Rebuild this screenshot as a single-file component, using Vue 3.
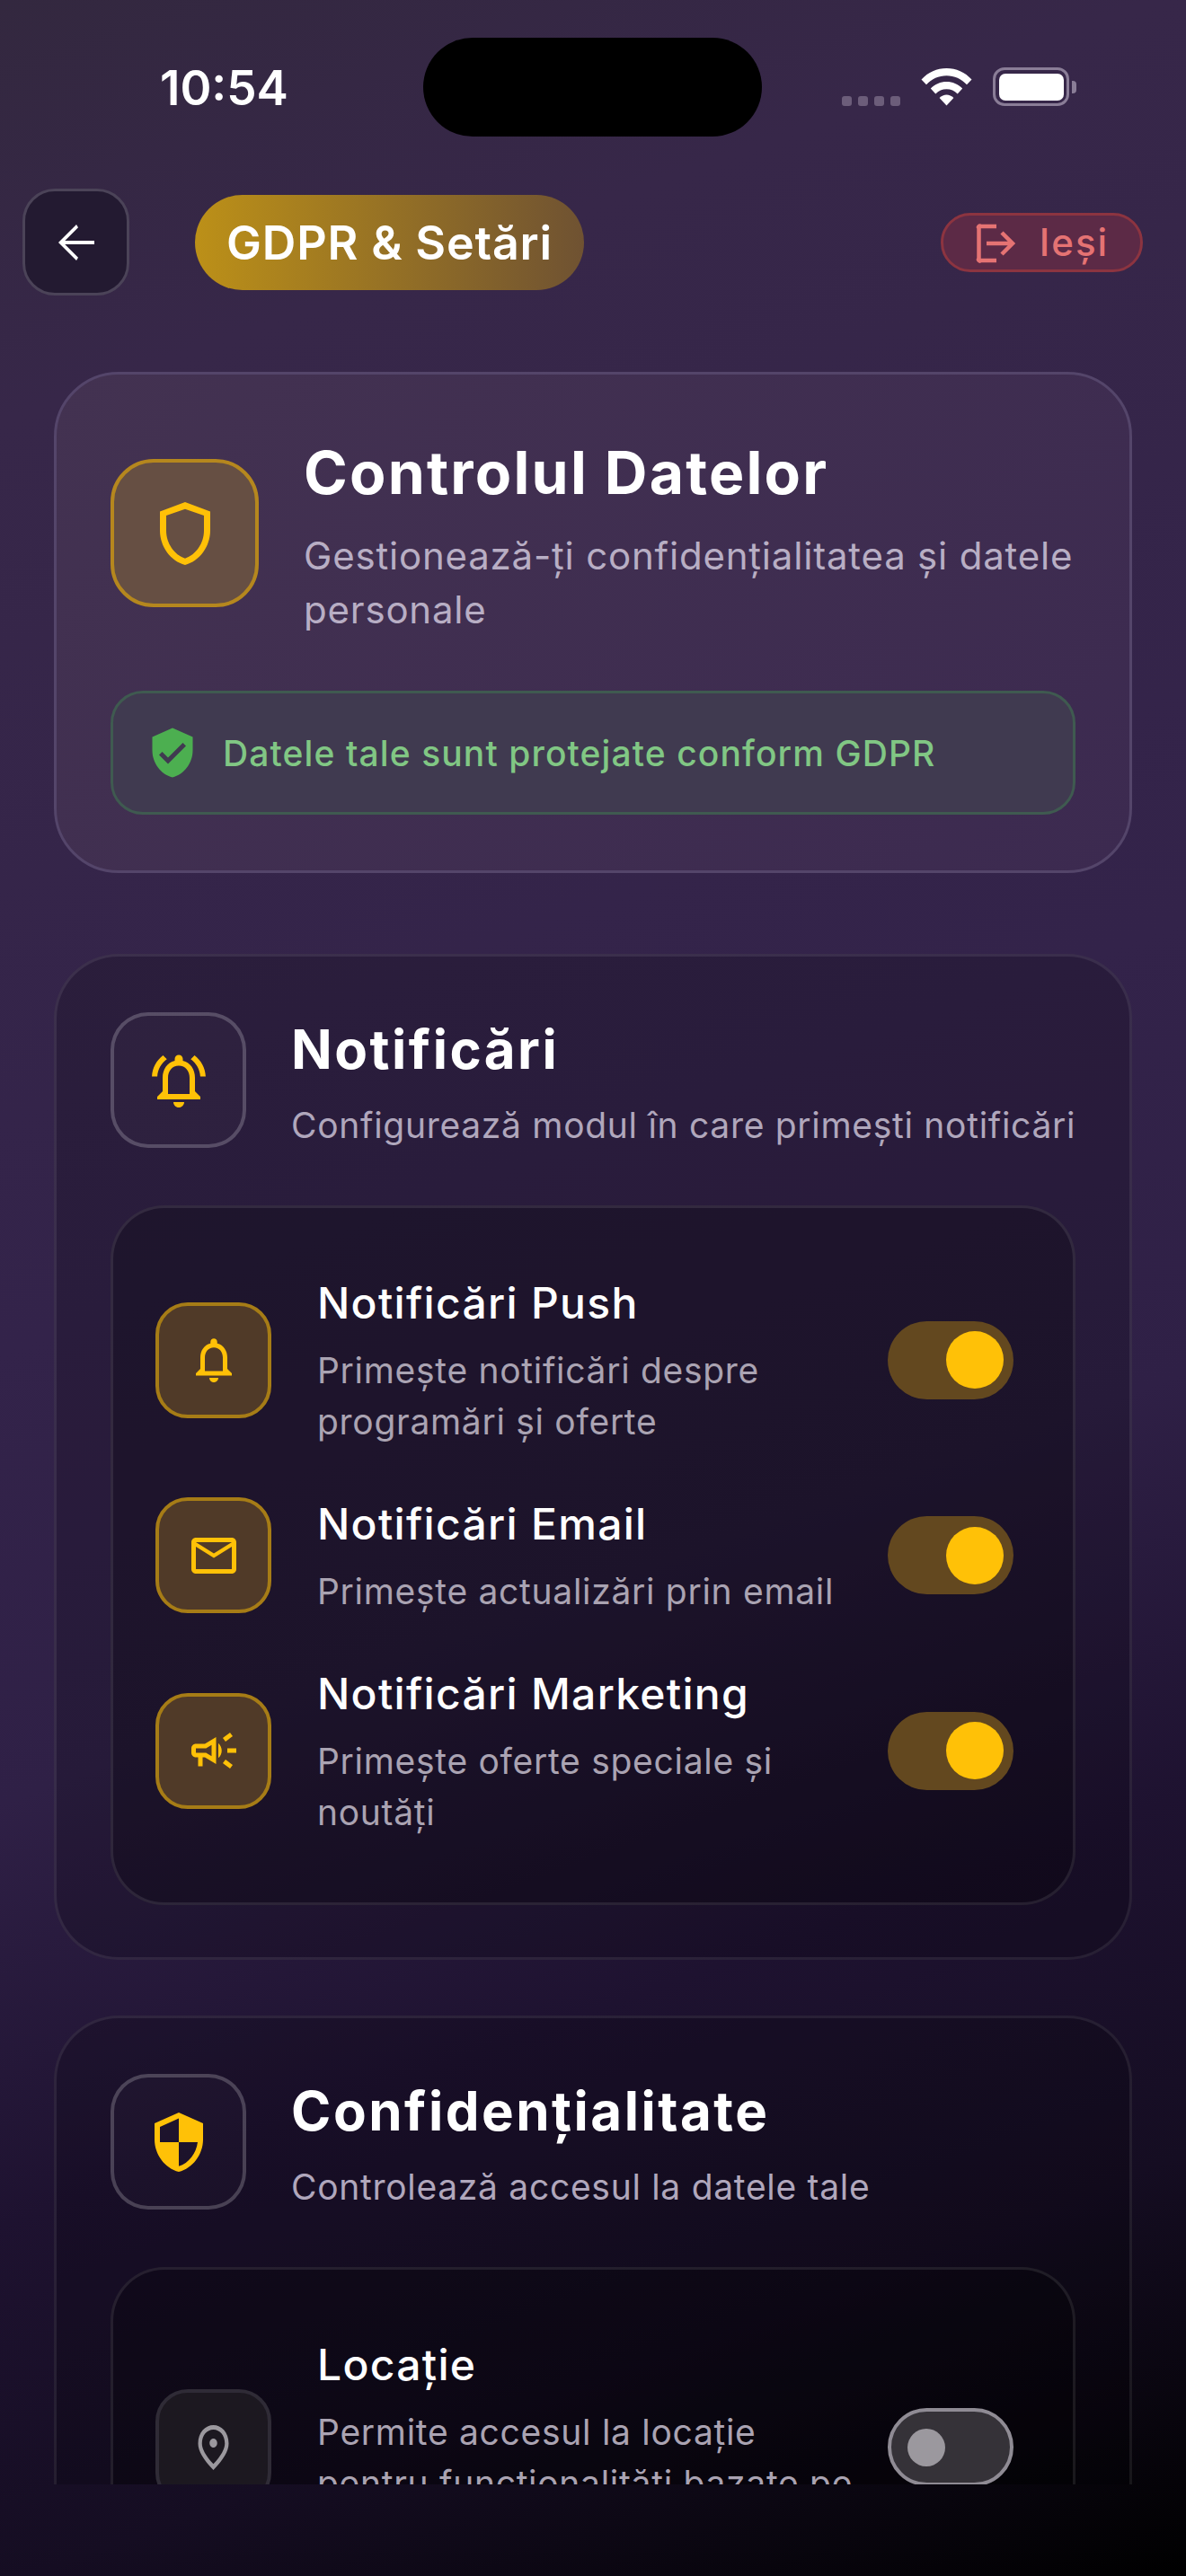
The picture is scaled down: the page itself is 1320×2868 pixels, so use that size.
<script setup>
const notificari = [
  { id: 'push', titlu: 'Notificări Push', text: 'Primește notificări despre programări și oferte', on: true },
  { id: 'email', titlu: 'Notificări Email', text: 'Primește actualizări prin email', on: true },
  { id: 'marketing', titlu: 'Notificări Marketing', text: 'Primește oferte speciale și noutăți', on: true }
]
const confidentialitate = [
  { id: 'locatie', titlu: 'Locație', text: 'Permite accesul la locație pentru funcționalități bazate pe locație', on: false }
]
</script>

<template>
  <div class="ecran">
    <div class="continut">
      <div class="status-bar">
        <span class="ora">10:54</span>
        <div class="insula"></div>
        <div class="status-dreapta">
          <div class="semnal"><i></i><i></i><i></i><i></i></div>
          <svg class="wifi" viewBox="0 0 57 42">
            <path fill="#fff" d="M28.5 0C17.8 0 8 4.2 0.5 12.6L6 18.3C12 11.7 19.8 8.2 28.5 8.2S45 11.7 51 18.3L56.5 12.6C49 4.2 39.2 0 28.5 0Z" />
            <path fill="#fff" d="M28.5 15C21.8 15 15.8 17.6 10.8 22.6L16.3 28.4C19.6 25 23.8 23.2 28.5 23.2S37.4 25 40.7 28.4L46.2 22.6C41.2 17.6 35.2 15 28.5 15Z" />
            <path fill="#fff" d="M28.5 29.6C25.6 29.6 22.8 30.8 20.6 33L28.5 41.6L36.4 33C34.2 30.8 31.4 29.6 28.5 29.6Z" />
          </svg>
          <div class="baterie"><div class="baterie-nivel"></div></div>
          <div class="baterie-cap"></div>
        </div>
      </div>

      <header class="antet">
        <button class="btn-inapoi">
          <svg viewBox="0 0 24 24" width="60" height="60" fill="#fff">
            <path d="M20 11.2H6.9l5.9-5.9L12 4l-8 8 8 8 .8-1.3-5.9-5.9H20v-1.6z" />
          </svg>
        </button>
        <div class="pastila-titlu">GDPR &amp; Setări</div>
        <button class="btn-iesi">
          <svg viewBox="0 0 48 48" width="48" height="48" fill="none" stroke="#e57373" stroke-width="4.5">
            <path d="M24 6H6.5A1 1 0 0 0 4.5 8V42A1 1 0 0 0 6.5 44H24" />
            <path d="M13 25H41M30 13L42 25L30 37" />
          </svg>
          <span>Ieși</span>
        </button>
      </header>

      <section class="card-control">
        <div class="control-sus">
          <div class="icon-control">
            <svg viewBox="0 0 24 24" width="84" height="84" fill="#ffc107">
              <path d="M12 2 4 5v6.09c0 5.05 3.41 9.76 8 10.91 4.59-1.15 8-5.86 8-10.91V5l-8-3zm6 9.09c0 4-2.55 7.7-6 8.83-3.45-1.13-6-4.82-6-8.83V6.31l6-2.12 6 2.12v4.78z" />
            </svg>
          </div>
          <div>
            <h1 class="control-titlu">Controlul Datelor</h1>
            <p class="control-text">Gestionează-ți confidențialitatea și datele personale</p>
          </div>
        </div>
        <div class="gdpr-ok">
          <svg viewBox="0 0 24 24" width="60" height="60" fill="#4caf50">
            <path d="M12 1 3 5v6c0 5.55 3.84 10.74 9 12 5.16-1.26 9-6.45 9-12V5l-9-4zm-2 16-4-4 1.41-1.41L10 14.17l6.59-6.59L18 9l-8 8z" />
          </svg>
          <span>Datele tale sunt protejate conform GDPR</span>
        </div>
      </section>

      <section class="sectiune prima">
        <div class="sectiune-cap">
          <div class="icon-sectiune">
            <svg viewBox="0 0 24 24" width="72" height="72" fill="#ffc107">
              <path d="M12 22c1.1 0 2-.9 2-2h-4c0 1.1.9 2 2 2zm6-6v-5c0-3.07-1.63-5.64-4.5-6.32V4c0-.83-.67-1.5-1.5-1.5s-1.5.67-1.5 1.5v.68C7.64 5.36 6 7.92 6 11v5l-2 2v1h16v-1l-2-2zm-2 1H8v-6c0-2.48 1.51-4.5 4-4.5s4 2.02 4 4.5v6z" />
              <path d="M7.58 4.08 6.15 2.65C3.75 4.48 2.17 7.3 2.03 10.5h2c.15-2.65 1.51-4.97 3.55-6.42zM19.97 10.5h2c-.15-3.2-1.73-6.02-4.12-7.85l-1.42 1.43c2.02 1.45 3.39 3.77 3.54 6.42z" />
            </svg>
          </div>
          <div>
            <h2 class="sectiune-titlu">Notificări</h2>
            <p class="sectiune-text">Configurează modul în care primești notificări</p>
          </div>
        </div>
        <div class="lista">
          <div v-for="n in notificari" :key="n.id" class="rand">
            <div class="icon-rand activ">
              <svg v-if="n.id === 'push'" viewBox="0 0 24 24" width="60" height="60" fill="#ffc107">
                <path d="M12 22c1.1 0 2-.9 2-2h-4c0 1.1.89 2 2 2zm6-6v-5c0-3.07-1.64-5.64-4.5-6.32V4c0-.83-.67-1.5-1.5-1.5s-1.5.67-1.5 1.5v.68C7.63 5.36 6 7.92 6 11v5l-2 2v1h16v-1l-2-2zm-2 1H8v-6c0-2.48 1.51-4.5 4-4.5s4 2.02 4 4.5v6z" />
              </svg>
              <svg v-else-if="n.id === 'email'" viewBox="0 0 24 24" width="60" height="60" fill="#ffc107">
                <path d="M20 4H4c-1.1 0-1.99.9-1.99 2L2 18c0 1.1.9 2 2 2h16c1.1 0 2-.9 2-2V6c0-1.1-.9-2-2-2zm0 14H4V8l8 5 8-5v10zm-8-7L4 6h16l-8 5z" />
              </svg>
              <svg v-else viewBox="0 0 24 24" width="60" height="60" fill="#ffc107">
                <path d="M18 11v2h4v-2h-4zm-2 6.61c.96.71 2.21 1.65 3.2 2.39.4-.53.8-1.07 1.2-1.6-.99-.74-2.24-1.68-3.2-2.4-.4.54-.8 1.08-1.2 1.61zM20.4 5.6c-.4-.53-.8-1.07-1.2-1.6-.99.74-2.24 1.68-3.2 2.4.4.53.8 1.07 1.2 1.6.96-.72 2.21-1.65 3.2-2.4zM4 9c-1.1 0-2 .9-2 2v2c0 1.1.9 2 2 2h1v4h2v-4h1l5 3V6L8 9H4zm5.03 1.71L11 9.53v4.94l-1.97-1.18-.48-.29H4v-2h4.55l.48-.29zM15.5 12c0-1.33-.58-2.53-1.5-3.35v6.69c.92-.81 1.5-2.01 1.5-3.34z" />
              </svg>
            </div>
            <div class="rand-texte">
              <h3>{{ n.titlu }}</h3>
              <p>{{ n.text }}</p>
            </div>
            <div class="comutator pornit"><div class="buton"></div></div>
          </div>
        </div>
      </section>

      <section class="sectiune">
        <div class="sectiune-cap">
          <div class="icon-sectiune">
            <svg viewBox="0 0 24 24" width="72" height="72" fill="#ffc107">
              <path d="M12 1 3 5v6c0 5.55 3.84 10.74 9 12 5.16-1.26 9-6.45 9-12V5l-9-4zm0 10.99h7c-.53 4.12-3.28 7.79-7 8.94V12H5V6.3l7-3.11v8.8z" />
            </svg>
          </div>
          <div>
            <h2 class="sectiune-titlu">Confidențialitate</h2>
            <p class="sectiune-text">Controlează accesul la datele tale</p>
          </div>
        </div>
        <div class="lista">
          <div v-for="c in confidentialitate" :key="c.id" class="rand">
            <div class="icon-rand">
              <svg viewBox="0 0 24 24" width="51" height="60" preserveAspectRatio="none" fill="#9b989e">
                <path d="M12 12c-1.1 0-2-.9-2-2s.9-2 2-2 2 .9 2 2-.9 2-2 2zm6-1.8C18 6.57 15.35 4 12 4s-6 2.57-6 6.2c0 2.34 1.95 5.44 6 9.14 4.05-3.7 6-6.8 6-9.14zM12 2c4.2 0 8 3.22 8 8.2 0 3.32-2.67 7.25-8 11.8-5.33-4.55-8-8.48-8-11.8C4 5.22 7.8 2 12 2z" />
              </svg>
            </div>
            <div class="rand-texte">
              <h3>{{ c.titlu }}</h3>
              <p>{{ c.text }}</p>
            </div>
            <div class="comutator"><div class="buton"></div></div>
          </div>
        </div>
      </section>
    </div>
  </div>
</template>

<style>
html, body {
  margin: 0;
  background: #000;
}
</style>

<style scoped>
.ecran {
  width: 1320px;
  height: 2868px;
  font-family: Inter, "Noto Sans", sans-serif;
  color: #fff;
  background: linear-gradient(160deg, #33283f 0%, #372749 14%, #33234a 45%, #2f2046 60%, #1e1230 74%, #150d22 86%, #000 100%);
  overflow: hidden;
}
.continut {
  height: 2766px;
  overflow: hidden;
}
h1, h2, h3, p { margin: 0; }

.status-bar {
  height: 152px;
  display: flex;
  position: relative;
}
.ora {
  position: absolute;
  left: 178px;
  top: 66px;
  font-size: 53px;
  line-height: 64px;
  font-weight: 600;
}
.insula {
  position: absolute;
  left: 471px;
  top: 42px;
  width: 377px;
  height: 110px;
  border-radius: 55px;
  background: #000;
}
.status-dreapta {
  position: absolute;
  left: 937px;
  top: 75px;
  display: flex;
  align-items: flex-end;
}
.semnal {
  display: flex;
  gap: 7px;
}
.semnal i {
  width: 11px;
  height: 11px;
  border-radius: 3px;
  background: #6c5d7a;
}
.wifi {
  width: 57px;
  height: 42px;
  margin-left: 23px;
}
.baterie {
  width: 85px;
  height: 43px;
  box-sizing: border-box;
  margin-left: 23px;
  border: 3.5px solid #8a7d97;
  border-radius: 13px;
  padding: 3.5px;
}
.baterie-nivel {
  height: 100%;
  background: #fff;
  border-radius: 7px;
}
.baterie-cap {
  width: 5px;
  height: 14px;
  margin: 0 0 14px 3px;
  background: #8a7d97;
  border-radius: 0 4px 4px 0;
}

.antet {
  height: 119px;
  margin-top: 58px;
  padding: 0 48px 0 25px;
  display: flex;
  align-items: center;
}
.btn-inapoi {
  width: 119px;
  height: 119px;
  border-radius: 36px;
  background: #231a31;
  border: 3px solid #4b4358;
  display: flex;
  align-items: center;
  justify-content: center;
  padding: 0;
}
.pastila-titlu {
  margin-left: 73px;
  width: 433px;
  height: 106px;
  box-sizing: border-box;
  padding-top: 2px;
  border-radius: 53px;
  background: linear-gradient(90deg, #bc9018, #6f5232);
  font-size: 52px;
  font-weight: 600;
  letter-spacing: 0.8px;
  line-height: 104px;
  text-align: center;
}
.btn-iesi {
  margin-left: auto;
  width: 225px;
  height: 66px;
  border-radius: 33px;
  background: #5c2a46;
  border: 3px solid #8c3440;
  color: #e57373;
  font-family: inherit;
  font-size: 42px;
  font-weight: 500;
  letter-spacing: 2px;
  display: flex;
  align-items: center;
  justify-content: center;
  gap: 24px;
  padding: 0;
}

.card-control {
  margin: 85px 60px 0;
  height: 558px;
  box-sizing: border-box;
  padding: 60px;
  border-radius: 72px;
  background: linear-gradient(135deg, #433251, #3c2a50);
  border: 3px solid #54456a;
}
.control-sus {
  display: flex;
  gap: 50px;
}
.icon-control {
  flex: none;
  width: 165px;
  height: 165px;
  box-sizing: border-box;
  margin-top: 34px;
  border-radius: 48px;
  background: #664f43;
  border: 4.5px solid #b5871e;
  display: flex;
  align-items: center;
  justify-content: center;
}
.control-titlu {
  margin-top: 9px;
  font-size: 66px;
  font-weight: 700;
  line-height: 80px;
  letter-spacing: 2.2px;
}
.control-text {
  margin-top: 23px;
  font-size: 42px;
  line-height: 60px;
  letter-spacing: 0.8px;
  color: #b8aec4;
}
.gdpr-ok {
  margin-top: 60px;
  height: 138px;
  box-sizing: border-box;
  padding: 0 36px;
  border-radius: 36px;
  background: #403a50;
  border: 3px solid #3f5a50;
  display: flex;
  align-items: center;
  gap: 26px;
  font-size: 39px;
  font-weight: 500;
  letter-spacing: 1.1px;
  color: #81c784;
}

.sectiune {
  margin: 62px 60px 0;
  padding: 62px 60px 58px;
  border-radius: 72px;
  background: rgba(0, 0, 0, 0.18);
  border: 3px solid rgba(255, 255, 255, 0.08);
}
.prima {
  margin-top: 90px;
}
.sectiune-cap {
  display: flex;
  gap: 50px;
}
.icon-sectiune {
  flex: none;
  width: 151px;
  height: 151px;
  box-sizing: border-box;
  border-radius: 42px;
  background: rgba(255, 255, 255, 0.02);
  border: 4.5px solid rgba(255, 255, 255, 0.2);
  display: flex;
  align-items: center;
  justify-content: center;
}
.sectiune-titlu {
  margin-top: 5px;
  font-size: 60px;
  font-weight: 700;
  line-height: 72px;
  letter-spacing: 2.5px;
}
.sectiune-text {
  margin-top: 22px;
  font-size: 39px;
  line-height: 54px;
  letter-spacing: 0.7px;
  white-space: nowrap;
  color: #b0a7bc;
}

.lista {
  margin-top: 62px;
  padding: 72px 0;
  border-radius: 60px;
  background: rgba(0, 0, 0, 0.25);
  border: 3px solid rgba(255, 255, 255, 0.09);
  display: flex;
  flex-direction: column;
  gap: 52px;
}
.rand {
  padding: 0 66px 0 47px;
  display: flex;
  align-items: center;
}
.icon-rand {
  flex: none;
  width: 129px;
  height: 129px;
  box-sizing: border-box;
  border-radius: 36px;
  background: #1c1820;
  border: 4.5px solid #2f2b36;
  display: flex;
  align-items: center;
  justify-content: center;
}
.icon-rand.activ {
  background: #503a28;
  border-color: #a67c16;
}
.rand-texte {
  flex: 1;
  margin: 0 24px 0 51px;
}
.rand-texte h3 {
  font-size: 48px;
  font-weight: 500;
  line-height: 67px;
  letter-spacing: 1.3px;
}
.rand-texte p {
  margin-top: 13px;
  font-size: 39px;
  line-height: 57px;
  letter-spacing: 0.7px;
  color: #aaa3b2;
}
.comutator {
  flex: none;
  width: 140px;
  height: 87px;
  box-sizing: border-box;
  border-radius: 44px;
  background: #353238;
  border: 4.5px solid #8f8b94;
  display: flex;
  align-items: center;
  padding-left: 18px;
}
.comutator .buton {
  width: 42px;
  height: 42px;
  border-radius: 50%;
  background: #9b989e;
}
.comutator.pornit {
  background: #63481f;
  border: none;
  justify-content: flex-end;
  padding: 0 11px 0 0;
}
.comutator.pornit .buton {
  width: 64px;
  height: 64px;
  background: #ffc107;
}
</style>
